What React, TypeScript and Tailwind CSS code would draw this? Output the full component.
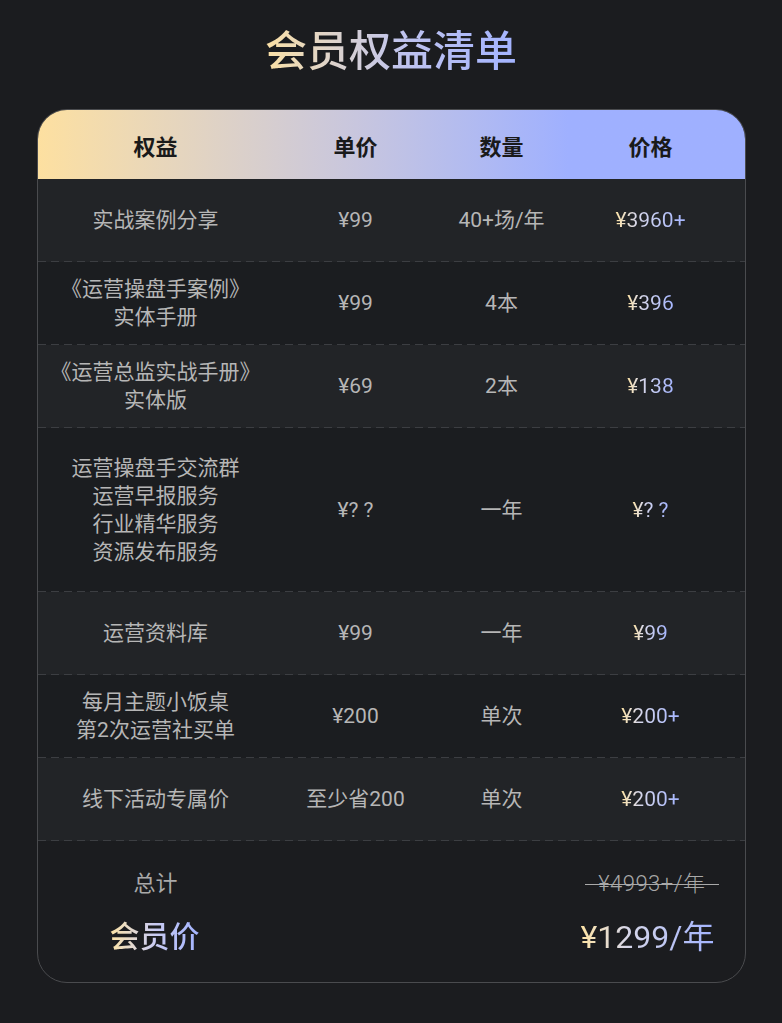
const rows = [
  { name: ["实战案例分享"], unit: "¥99", qty: "40+场/年", price: "¥3960+" },
  { name: ["《运营操盘手案例》", "实体手册"], unit: "¥99", qty: "4本", price: "¥396" },
  { name: ["《运营总监实战手册》", "实体版"], unit: "¥69", qty: "2本", price: "¥138" },
  {
    name: ["运营操盘手交流群", "运营早报服务", "行业精华服务", "资源发布服务"],
    unit: "¥? ?",
    qty: "一年",
    price: "¥? ?",
    tall: true,
  },
  { name: ["运营资料库"], unit: "¥99", qty: "一年", price: "¥99" },
  { name: ["每月主题小饭桌", "第2次运营社买单"], unit: "¥200", qty: "单次", price: "¥200+" },
  { name: ["线下活动专属价"], unit: "至少省200", qty: "单次", price: "¥200+" },
];

const font = "font-['Roboto','Noto_Sans_CJK_SC',sans-serif]";
const cols = "grid grid-cols-[236px_164px_128px_170px]";

export default function App() {
  return (
    <div className={`min-h-[1023px] w-full bg-[#1b1c1f] ${font}`}>
      <h1 className="flex justify-center pt-[22px] pb-[27px]">
        <span className="bg-linear-to-r from-[#fbe0a4] via-[#bfc3ee] via-55% to-[#a3b3ff] bg-clip-text text-[42px] font-medium leading-[60px] text-transparent">
          会员权益清单
        </span>
      </h1>

      <div className="mx-auto w-[709px] overflow-hidden rounded-[30px] border border-[#4a4b4e] bg-[#1b1c1f]">
        {/* header */}
        <div
          className={`${cols} h-[69px] items-center bg-linear-to-r from-[#fde0a0] via-[#c8c6de] via-45% to-[#9fb0ff] to-75% pt-[6px] text-[22px] font-bold text-[#1a1a1a]`}
        >
          <div className="text-center">权益</div>
          <div className="text-center">单价</div>
          <div className="text-center">数量</div>
          <div className="text-center">价格</div>
        </div>

        {rows.map((r, i) => (
          <div key={i} className={i % 2 === 0 ? "bg-[#222427]" : "bg-[#1b1d20]"}>
            <div
              className={`${cols} items-center text-[21px] leading-[28px] text-[#b6b6b6] ${
                r.tall ? "h-[163px]" : "h-[82px]"
              }`}
            >
              <div className="flex flex-col items-center">
                {r.name.map((n, j) => (
                  <span key={j}>{n}</span>
                ))}
              </div>
              <div className="text-center">{r.unit}</div>
              <div className="text-center">{r.qty}</div>
              <div className="flex justify-center">
                <span className="bg-linear-to-r from-[#fde3a5] via-[#d8d8ea] via-30% to-[#a5b5ff] bg-clip-text text-[21px] font-normal text-transparent">
                  {r.price}
                </span>
              </div>
            </div>
            <div className="h-px bg-[repeating-linear-gradient(90deg,#3c3e42_0_8px,transparent_8px_13px)]" />
          </div>
        ))}

        {/* footer */}
        <div className="flex h-[141px] flex-col justify-center gap-[18px] pt-[2px]">
          <div className="flex items-center justify-between">
            <span className="w-[236px] text-center text-[22px] leading-[30px] text-[#a9a9a9]">总计</span>
            <span className="relative mr-[26px] px-[13px] text-[22px] leading-[30px] font-light tracking-[0.5px] text-[#a9a9a9]">
              ¥4993+/年
              <span className="absolute top-[15px] right-0 left-0 h-[1.5px] bg-[#a9a9a9]" />
            </span>
          </div>
          <div className="flex items-center justify-between">
            <span className="ml-[72px] bg-linear-to-r from-[#fde3a5] via-[#c9cbf2] to-[#a3b3ff] bg-clip-text text-[30px] font-medium leading-[40px] text-transparent">
              会员价
            </span>
            <span className="mr-[30px] bg-linear-to-r from-[#fde3a5] via-[#d6d6e8] via-35% to-[#a3b3ff] bg-clip-text text-[32px] font-normal leading-[40px] text-transparent">
              ¥1299/年
            </span>
          </div>
        </div>
      </div>
    </div>
  );
}
